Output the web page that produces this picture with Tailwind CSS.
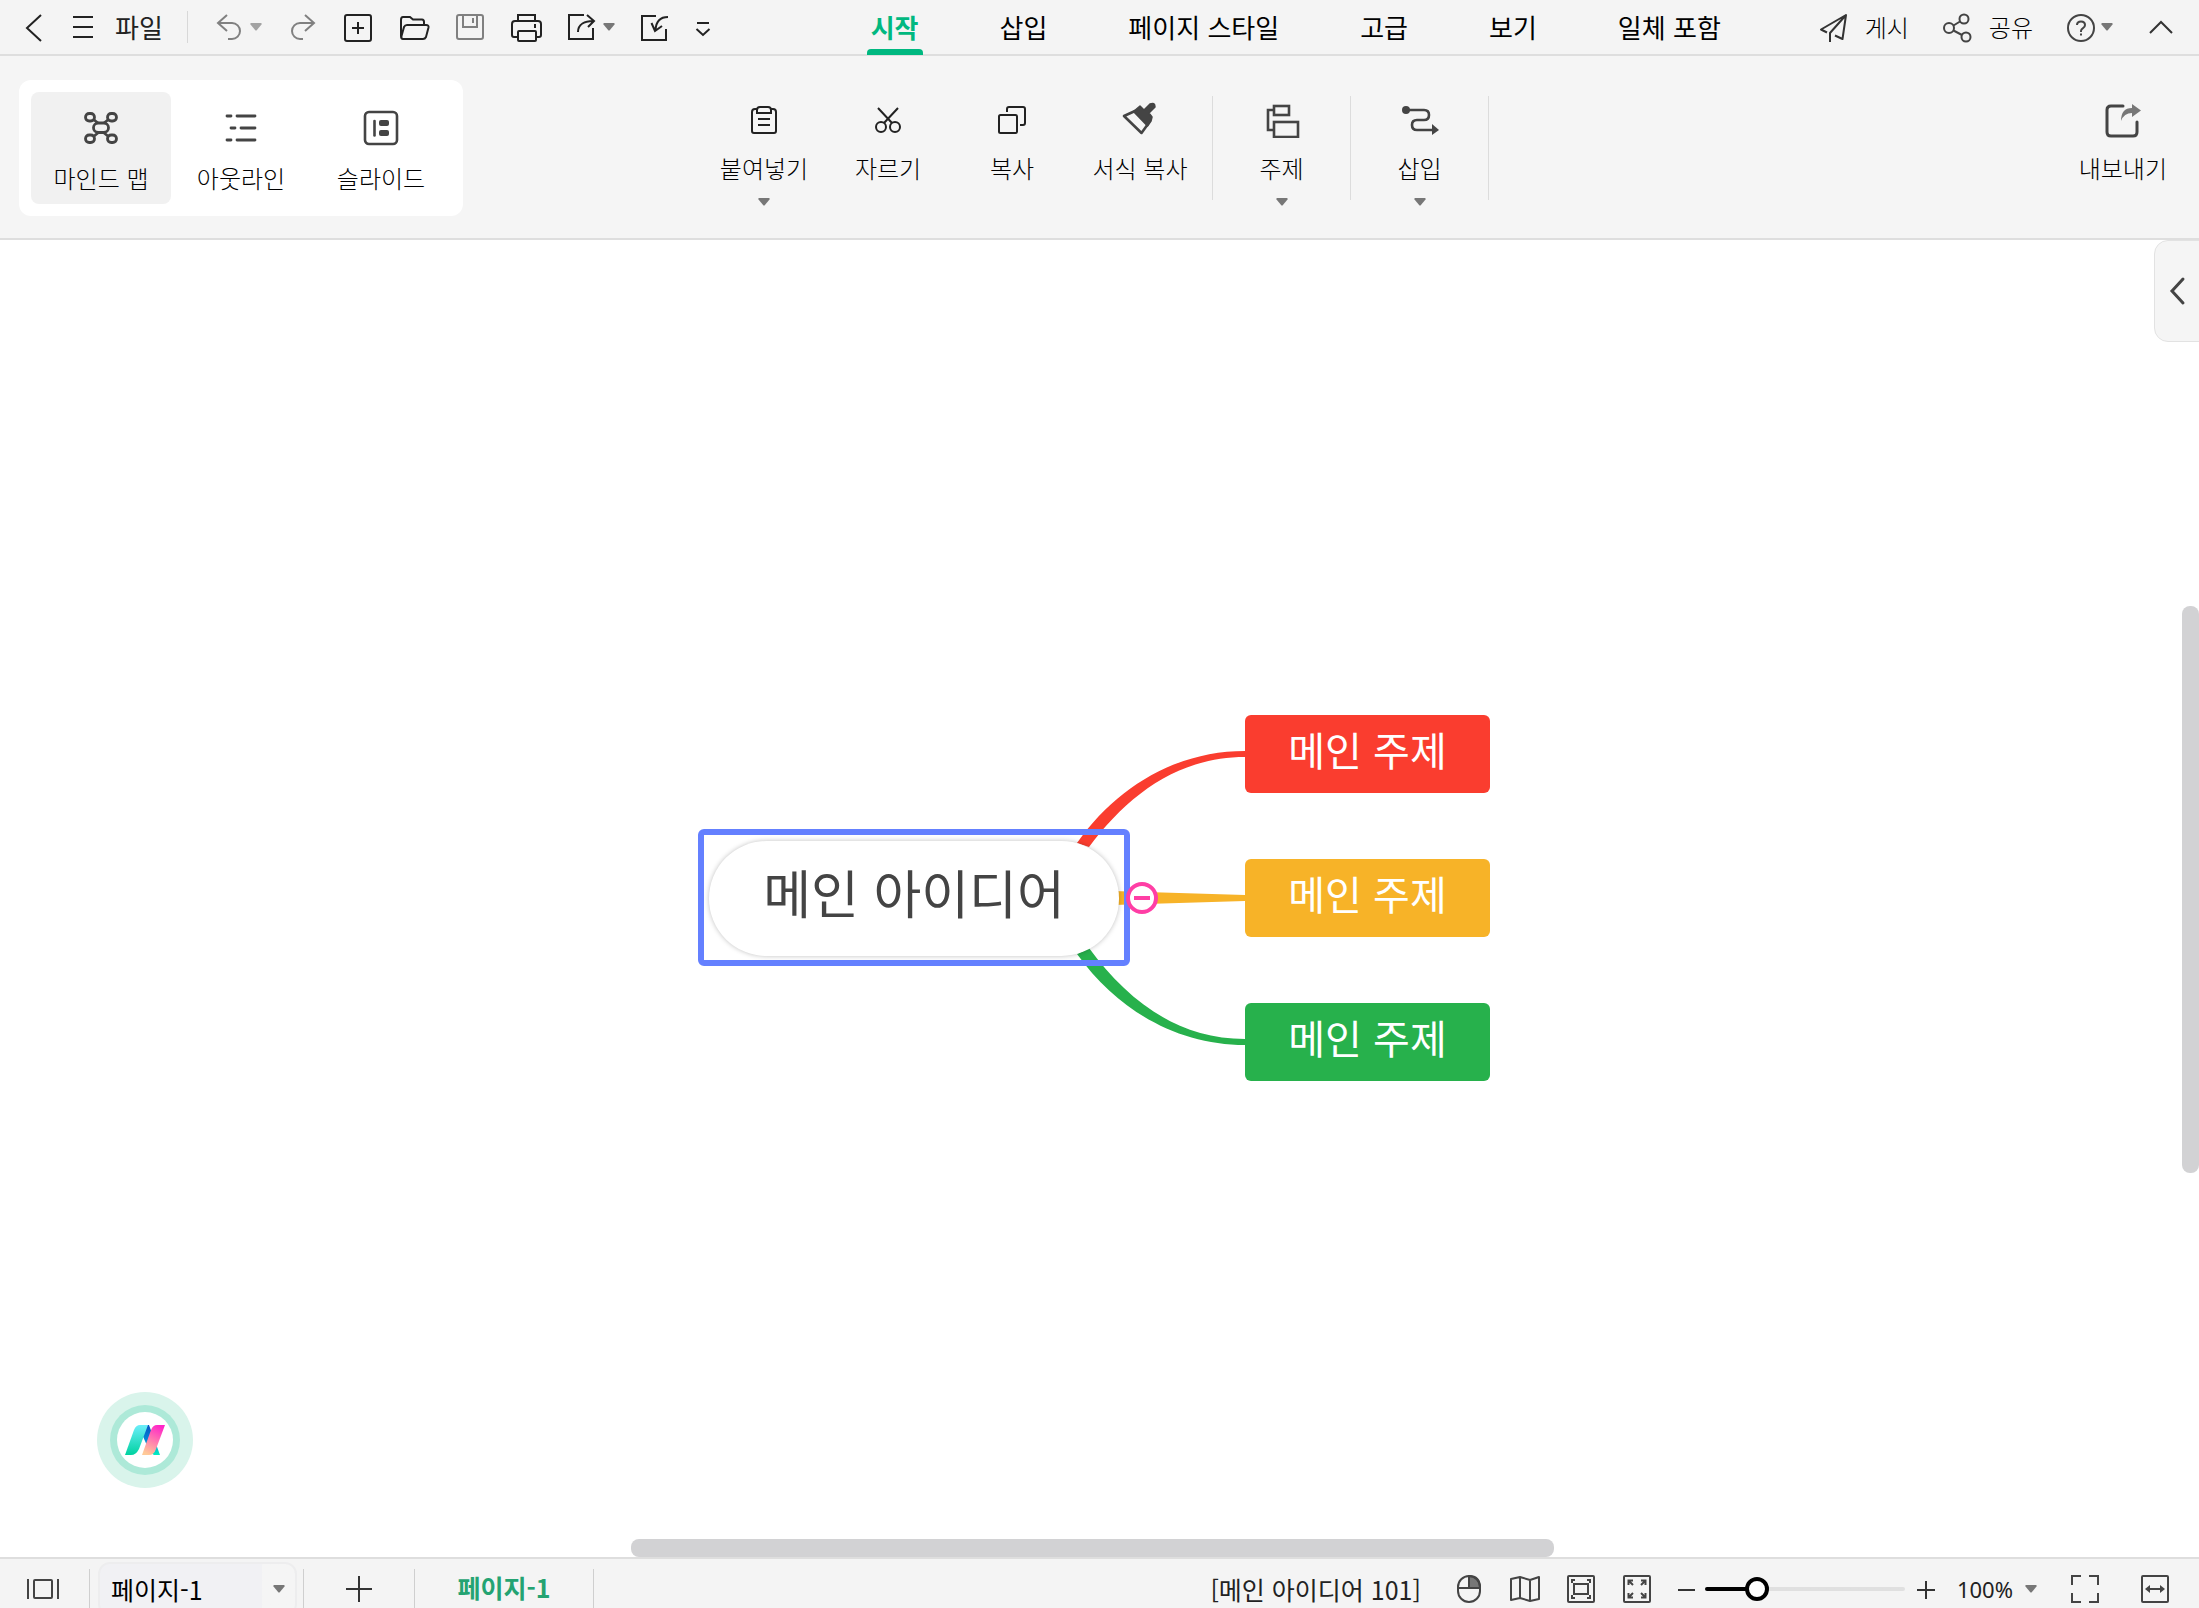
<!DOCTYPE html>
<html lang="ko">
<head>
<meta charset="utf-8">
<title>마인드 맵</title>
<script src="https://cdn.jsdelivr.net/npm/@tailwindcss/browser@4"></script>
</head>
<body class="flex h-screen flex-col overflow-hidden bg-white font-['Noto_Sans_CJK_KR',sans-serif] text-2xl text-[#222]">

<header class="flex h-14 shrink-0 items-center border-b-2 border-[#dedede] bg-[#f4f4f4]">
  <div class="flex items-center pl-[18px]">
    <button aria-label="뒤로"><svg class="size-8" viewBox="0 0 32 32" fill="none" stroke="#222" stroke-width="2"><path d="M23 4 9 17 23 30"/></svg></button>
    <button class="ml-[17px] flex items-center gap-4 text-[26px] leading-8"><svg class="size-8" viewBox="0 0 32 32" fill="none" stroke="#222" stroke-width="2"><path d="M6 6H26M6 16H26M6 26H26"/></svg>파일</button>
    <div class="ml-6 h-8 w-px bg-[#d8d8d8]"></div>
    <button class="ml-6 flex items-center gap-1.5" aria-label="실행 취소"><svg class="size-8" viewBox="0 0 32 32" fill="none" stroke="#808080" stroke-width="2"><path d="M15 4 6 12l9 8M6 12H20a8 8 0 0 1 0 16H16"/></svg><svg class="h-2 w-3" viewBox="0 0 12 8" fill="#a3a3a3"><path d="M1 0H11Q12 0 11.500 1.500L6.500 7.500H5.500L.5 1.500Q0 0 1 0Z"/></svg></button>
    <div class="ml-[25px] flex items-center gap-6">
      <button aria-label="다시 실행"><svg class="size-8" viewBox="0 0 32 32" fill="none" stroke="#808080" stroke-width="2"><path d="M18 4 27 12l-9 8M27 12H13a8 8 0 0 0 0 16h3"/></svg></button>
      <button aria-label="새로 만들기"><svg class="size-8" viewBox="0 0 32 32" fill="none" stroke="#222" stroke-width="2"><rect x="2" y="4" width="26" height="26" rx="2"/><path d="M9 17H21M15 11V23"/></svg></button>
      <button aria-label="열기"><svg class="size-8" viewBox="0 0 32 32" fill="none" stroke="#222" stroke-width="2"><path d="M4 28Q2 28 2 25V9Q2 6 4 6H11L14 8.500H23Q25 8.500 25 11V14M8 14H27Q30 14 29.500 16.500L27 26Q26 28 24 28H4Q2 28 2.500 25L5 16Q6 14 8 14Z"/></svg></button>
      <button aria-label="저장"><svg class="size-8" viewBox="0 0 32 32" fill="none" stroke="#808080" stroke-width="2"><rect x="2" y="4" width="26" height="24" rx="2"/><path d="M8 4V16H22V4M18 7V12"/></svg></button>
      <button aria-label="인쇄"><svg class="size-8" viewBox="0 0 32 32" fill="none" stroke="#222" stroke-width="2"><path d="M7 9V4H24V9M6 26H3Q1 26 1 24V13Q1 10 4 10H27Q30 10 30 13V24Q30 26 28 26H25M24 13V17"/><rect x="7" y="20" width="18" height="10" rx="1"/></svg></button>
      <button class="flex items-center gap-1" aria-label="내보내기"><svg class="size-8" viewBox="0 0 32 32" fill="none" stroke="#222" stroke-width="2"><path d="M17 4H2V28H26V17M11 21C11 13 18 10 26 10M20 4l7 6-6 6"/></svg><svg class="h-2 w-3" viewBox="0 0 12 8" fill="#777"><path d="M1 0H11Q12 0 11.500 1.500L6.500 7.500H5.500L.5 1.500Q0 0 1 0Z"/></svg></button>
      <button aria-label="가져오기"><svg class="size-8" viewBox="0 0 32 32" fill="none" stroke="#222" stroke-width="2"><path d="M17 5H3V29H27V18M29 6C21 6 17 11 16.500 19M12.500 12 16 20l7-5"/></svg></button>
      <button aria-label="더 보기"><svg class="h-8 w-4" viewBox="0 0 16 32" fill="none" stroke="#222" stroke-width="2"><path d="M2 12H14M1.500 18 8 24l6.500-6"/></svg></button>
    </div>
  </div>
  <nav class="flex flex-1 items-center justify-center gap-[81px] self-stretch pl-16 text-[26px] text-black">
    <a href="#" class="relative flex h-full items-center font-bold text-[#00b880]">시작<span class="absolute inset-x-0 -bottom-px -mx-1 h-1.5 rounded-t bg-[#00b880]"></span></a>
    <a href="#">삽입</a>
    <a href="#">페이지 스타일</a>
    <a href="#">고급</a>
    <a href="#">보기</a>
    <a href="#">일체 포함</a>
  </nav>
  <div class="flex items-center gap-8 pr-[22px] font-light text-black">
    <button class="flex items-center gap-4"><svg class="size-8" viewBox="0 0 32 32" fill="none" stroke="#333" stroke-width="2" stroke-linejoin="round"><path d="M10 21.500 4 18.500 29 4 25.500 28 18 24.500M29 4 13 22V31"/></svg>게시</button>
    <button class="flex items-center gap-4"><svg class="size-8" viewBox="0 0 32 32" fill="none" stroke="#444" stroke-width="2"><circle cx="8" cy="17" r="5"/><circle cx="23" cy="8" r="4.500"/><circle cx="25" cy="26" r="4.500"/><path d="M12.500 14.500 19 10.500M12.500 19.500 21 24"/></svg>공유</button>
    <button class="flex items-center gap-1" aria-label="도움말"><svg class="size-8" viewBox="0 0 32 32" fill="none" stroke="#444" stroke-width="2"><circle cx="16" cy="17" r="13"/><path d="M12 14Q12 10.500 16 10.500T20 14Q20 16 18 17.200T16 20V21M16 22.500V24.500"/></svg><svg class="h-2 w-3" viewBox="0 0 12 8" fill="#777"><path d="M1 0H11Q12 0 11.500 1.500L6.500 7.500H5.500L.5 1.500Q0 0 1 0Z"/></svg></button>
    <button aria-label="리본 접기"><svg class="size-8" viewBox="0 0 32 32" fill="none" stroke="#333" stroke-width="2"><path d="M5 22 16 11 27 22"/></svg></button>
  </div>
</header>

<section class="grid h-[184px] shrink-0 grid-cols-[1fr_auto_1fr] border-b-2 border-[#dedede] bg-[#f5f5f5] font-light text-black">
  <div class="flex items-start pt-6 pl-[19px]">
    <div class="flex rounded-xl bg-white p-3">
      <button class="flex h-28 w-[140px] flex-col items-center gap-3.5 rounded-lg bg-[#f1f1f1] pt-[18px] leading-9">
        <svg class="size-9" viewBox="0 0 36 36" fill="none" stroke="#444" stroke-width="2.800"><rect x="2.500" y="3.500" width="9" height="7.500" rx="3.700"/><rect x="24.500" y="3.500" width="9" height="7.500" rx="3.700"/><rect x="2.500" y="25" width="9" height="7.500" rx="3.700"/><rect x="24.500" y="25" width="9" height="7.500" rx="3.700"/><rect x="10.500" y="13" width="15" height="9.500" rx="4.700"/><path d="M10.500 9.500 15 13M25.500 9.500 21 13M10.500 26.500 15.500 22.500M25.500 26.500 20.500 22.500"/></svg>마인드 맵</button>
      <button class="flex h-28 w-[140px] flex-col items-center gap-3.5 rounded-lg pt-[18px] leading-9">
        <svg class="size-9" viewBox="0 0 36 36" fill="none" stroke="#444" stroke-width="2.800" stroke-linecap="round"><path d="M4 6H8M14 6H32M8 18H12M18 18H32M4 30H8M14 30H32"/></svg>아웃라인</button>
      <button class="flex h-28 w-[140px] flex-col items-center gap-3.5 rounded-lg pt-[18px] leading-9">
        <svg class="size-9" viewBox="0 0 36 36" fill="none" stroke="#444" stroke-width="2.600"><rect x="2" y="2" width="32" height="32" rx="4"/><path d="M11.500 11V25.500" stroke-linecap="round"/><rect x="16" y="10" width="10" height="6" rx="2" fill="#444" stroke="none"/><rect x="16" y="20" width="10" height="6" rx="2" fill="#444" stroke="none"/></svg>슬라이드</button>
    </div>
  </div>
  <div class="flex items-start pt-10 pr-2">
    <button class="flex w-[124px] flex-col items-center pt-1.5 leading-9"><svg class="mb-3 size-9" viewBox="0 0 36 36" fill="none" stroke="#222" stroke-width="2"><path d="M11 7H9Q6 7 6 10V29Q6 31 8 31H28Q30 31 30 29V10Q30 7 27 7H25M11 11V8Q11 5 14 5H22Q25 5 25 8V11ZM12 17H24M12 23H24"/></svg>붙여넣기<svg class="mt-3 h-2 w-3" viewBox="0 0 12 8" fill="#777"><path d="M1 0H11Q12 0 11.500 1.500L6.500 7.500H5.500L.5 1.500Q0 0 1 0Z"/></svg></button>
    <button class="flex w-[124px] flex-col items-center pt-1.5 leading-9"><svg class="mb-3 size-9" viewBox="0 0 36 36" fill="none" stroke="#222" stroke-width="2"><circle cx="11" cy="25" r="5"/><circle cx="25" cy="25" r="5"/><path d="M8 6 22 21M28 6 14 21"/></svg>자르기</button>
    <button class="flex w-[124px] flex-col items-center pt-1.5 leading-9"><svg class="mb-3 size-9" viewBox="0 0 36 36" fill="none" stroke="#222" stroke-width="2"><rect x="5" y="13" width="18" height="18" rx="1.500"/><path d="M13 10V7Q13 5 15 5H29Q31 5 31 7V21Q31 23 29 23H26"/></svg>복사</button>
    <button class="flex w-[132px] flex-col items-center pt-1.5 leading-9"><svg class="mb-3 size-9" viewBox="0 0 36 36" fill="none" stroke="#444" stroke-width="2.600" stroke-linejoin="round"><path d="M2 14 13 9 26 22 19.500 31Z"/><path d="M11.500 9.500 18 4 22 8 28 2Q33 0 33 5L27 11 30 15 29 19 25.500 24Z" fill="#444" stroke-width="1.500"/></svg>서식 복사</button>
    <div class="ml-1.5 flex h-[104px]">
      <button class="flex w-[138px] flex-col items-center border-l border-[#dcdcdc] pt-1.5 leading-9"><svg class="mb-3 size-9 shrink-0" viewBox="0 0 36 36" fill="none" stroke="#444" stroke-width="2.600"><rect x="10" y="4" width="15" height="9"/><rect x="10" y="20" width="24" height="15"/><path d="M10 8H4V28H10"/></svg>주제<svg class="mt-3 h-2 w-3 shrink-0" viewBox="0 0 12 8" fill="#777"><path d="M1 0H11Q12 0 11.500 1.500L6.500 7.500H5.500L.5 1.500Q0 0 1 0Z"/></svg></button>
      <button class="flex w-[139px] flex-col items-center border-x border-[#dcdcdc] pt-1.5 leading-9"><svg class="mb-3 size-9 shrink-0 overflow-visible" viewBox="0 0 36 36" fill="none" stroke="#444" stroke-width="2.600"><circle cx="4" cy="8" r="4" fill="#444" stroke="none"/><path d="M4 8H22Q27 8 27 13T22 18H15Q10 18 10 23T15 28H31"/><path d="M30 22 37 28 30 33Z" fill="#444" stroke="none"/></svg>삽입<svg class="mt-3 h-2 w-3 shrink-0" viewBox="0 0 12 8" fill="#777"><path d="M1 0H11Q12 0 11.500 1.500L6.500 7.500H5.500L.5 1.500Q0 0 1 0Z"/></svg></button>
    </div>
  </div>
  <div class="flex items-start justify-end pt-10 pr-8">
    <button class="flex flex-col items-center pt-1.5 leading-9"><svg class="mb-3 h-9 w-10" viewBox="0 0 40 36" fill="none" stroke="#444" stroke-width="3" stroke-linecap="round"><path d="M20 4H8Q4 4 4 8V30Q4 34 8 34H30Q34 34 34 30V20"/><path d="M18 19Q18 6 29 6V2L38 8.500 29 15V11Q21 11 18 19Z" fill="#777" stroke="none"/></svg>내보내기</button>
  </div>
</section>

<main class="relative flex min-h-0 flex-1 items-center justify-center overflow-hidden bg-white">
  <div class="relative h-[367px] w-[803px]">
    <svg class="absolute inset-0 size-full" viewBox="0 0 803 367">
      <path fill="#fa3d2f" d="M379 128C420 70 480 36 547 36V42C480 42 430 80 391 132Z"/>
      <path fill="#f7b328" d="M415 176 547 180V186L415 190Z"/>
      <path fill="#27b14c" d="M391 233C430 286 480 324 547 324V330C480 330 420 296 379 239Z"/>
    </svg>
    <div class="absolute top-[126px] left-[11px] flex h-[115px] w-[410px] items-center justify-center rounded-full bg-white pb-3.5 text-[52px] leading-none text-[#444] shadow-[0_0_5px_rgba(0,0,0,0.25)]">메인 아이디어</div>
    <div class="absolute top-[114px] left-0 h-[137px] w-[432px] rounded-md border-[6px] border-[#6480ff]"></div>
    <button class="absolute top-[167px] left-[428px] flex size-8 items-center justify-center rounded-full border-4 border-[#ff3ea5] bg-white" aria-label="접기"><span class="h-1 w-4 bg-[#ff3ea5]"></span></button>
    <div class="absolute top-0 left-[547px] flex h-[78px] w-[245px] items-center justify-center rounded-md bg-[#fa3d2f] pb-2.5 text-[40px] leading-none text-white">메인 주제</div>
    <div class="absolute top-[144px] left-[547px] flex h-[78px] w-[245px] items-center justify-center rounded-md bg-[#f7b328] pb-2.5 text-[40px] leading-none text-white">메인 주제</div>
    <div class="absolute top-[288px] left-[547px] flex h-[78px] w-[245px] items-center justify-center rounded-md bg-[#27b14c] pb-2.5 text-[40px] leading-none text-white">메인 주제</div>
  </div>

  <button class="absolute bottom-[69px] left-[97px] flex size-24 items-center justify-center rounded-full bg-[#d9f4eb]" aria-label="AI 도우미">
    <span class="flex size-[70px] items-center justify-center rounded-full bg-[#ade9d8]"><span class="flex size-14 items-center justify-center rounded-full bg-white">
      <svg class="h-8 w-10" viewBox="0 0 40 32">
        <defs>
          <linearGradient id="teal" x1="0" y1="0" x2="0" y2="1"><stop offset="0" stop-color="#6ceefa"/><stop offset="1" stop-color="#00d2a0"/></linearGradient>
          <linearGradient id="blue" x1="0" y1="0" x2="0" y2="1"><stop offset="0" stop-color="#0a50c0"/><stop offset=".5" stop-color="#0088d8"/><stop offset="1" stop-color="#00f0c0"/></linearGradient>
          <linearGradient id="pink" x1=".7" y1="0" x2=".3" y2="1"><stop offset="0" stop-color="#ff25c8"/><stop offset="1" stop-color="#ffca98"/></linearGradient>
        </defs>
        <path fill="url(#blue)" d="M22 1H24L35 31H29Q25 29 24 26L16 8Z"/>
        <path fill="url(#teal)" d="M15 1H23L14 25Q11 31 6 31H0L9 6Q11 1 15 1Z"/>
        <path fill="url(#pink)" d="M32 1H40L31 25Q29 31 24 31H17L26 6Q28 1 32 1Z"/>
      </svg></span></span>
  </button>

  <button class="absolute top-0 -right-px flex h-[102px] w-[46px] items-center rounded-l-[14px] border border-[#e2e2e2] bg-[#f5f5f5] pl-3.5" aria-label="패널 열기"><svg class="h-8 w-5" viewBox="0 0 20 32" fill="none" stroke="#444" stroke-width="3" stroke-linecap="round"><path d="M14 4 3 16 14 28"/></svg></button>
  <div class="absolute top-[366px] right-0 h-[567px] w-[17px] rounded-lg bg-[#d2d2d4]"></div>
  <div class="absolute bottom-0 left-[631px] h-[18px] w-[923px] rounded-lg bg-[#d2d2d4]"></div>
</main>

<footer class="h-[51px] shrink-0 overflow-hidden border-t-2 border-[#dedede] bg-[#f4f4f4]">
  <div class="flex h-[60px] items-center">
    <button class="ml-[25px]" aria-label="페이지 패널"><svg class="h-8 w-9" viewBox="0 0 36 32" fill="none" stroke="#444" stroke-width="2"><path d="M3 6V26M33 6V26"/><rect x="9" y="7" width="18" height="18" rx="1"/></svg></button>
    <div class="ml-7 h-[50px] w-px self-end bg-[#cfcfcf]"></div>
    <label class="relative ml-2 flex h-[54px] w-[199px] items-center rounded-xl border-2 border-[#ededee] bg-linear-to-r from-[#f1f1f4] from-83% to-[#f5f5f5] to-83%">
      <select class="w-full appearance-none bg-transparent pl-[11px] text-[25px] leading-8 text-black" aria-label="페이지 선택"><option>페이지-1</option></select>
      <svg class="pointer-events-none absolute right-2.5 h-2 w-3" viewBox="0 0 12 8" fill="#777"><path d="M1 0H11Q12 0 11.500 1.500L6.500 7.500H5.500L.5 1.500Q0 0 1 0Z"/></svg>
    </label>
    <div class="ml-1.5 h-[50px] w-px self-end bg-[#cfcfcf]"></div>
    <button class="ml-[39px]" aria-label="페이지 추가"><svg class="size-8" viewBox="0 0 32 32" fill="none" stroke="#333" stroke-width="2"><path d="M3 16H29M16 3V29"/></svg></button>
    <a href="#" class="ml-[39px] flex h-[50px] w-[180px] items-center justify-center self-end border-x border-[#cfcfcf] pb-3 text-[25px] font-bold text-[#24a372]">페이지-1</a>

    <div class="ml-auto flex items-center pr-7">
      <span class="text-[25px] leading-8">[메인 아이디어 101]</span>
      <div class="ml-8 flex items-center gap-6">
        <button aria-label="마우스"><svg class="size-8" viewBox="0 0 32 32" fill="none" stroke="#444" stroke-width="2"><path d="M16 15V3Q27 3 27 15Z" fill="#777"/><rect x="5" y="3" width="22" height="26" rx="11"/><path d="M5 15H27"/></svg></button>
        <button aria-label="개요 지도"><svg class="size-8" viewBox="0 0 32 32" fill="none" stroke="#444" stroke-width="2" stroke-linejoin="round"><path d="M2 6 11 4 21 7 30 4V26L21 28 11 25 2 27ZM11 4V25M21 7V28"/></svg></button>
        <button aria-label="화면 맞춤"><svg class="size-8" viewBox="0 0 32 32" fill="none" stroke="#444" stroke-width="2"><rect x="3" y="3" width="26" height="26" rx="1"/><rect x="9" y="11" width="14" height="10"/><path d="M7 10V7H10M22 7H25V10M7 22V25H10M22 25H25V22"/></svg></button>
        <button aria-label="선택 영역 맞춤"><svg class="size-8" viewBox="0 0 32 32" fill="none" stroke="#444" stroke-width="2"><rect x="3" y="3" width="26" height="26" rx="1"/><path d="M7.500 12V7.500H12M7.500 7.500 12 12M20 7.500H24.500V12M24.500 7.500 20 12M7.500 20V24.500H12M7.500 24.500 12 20M20 24.500H24.500V20M24.500 24.500 20 20"/></svg></button>
      </div>
      <button class="ml-6" aria-label="축소"><svg class="size-5" viewBox="0 0 20 20" stroke="#333" stroke-width="2"><path d="M1 11H18"/></svg></button>
      <input type="range" min="0" max="100" value="23" aria-label="확대/축소" class="ml-2 h-1 w-[200px] appearance-none rounded-full bg-linear-to-r from-black from-25% to-[#e0e0e0] to-25% [&::-webkit-slider-thumb]:size-6 [&::-webkit-slider-thumb]:appearance-none [&::-webkit-slider-thumb]:rounded-full [&::-webkit-slider-thumb]:border-4 [&::-webkit-slider-thumb]:border-black [&::-webkit-slider-thumb]:bg-white">
      <button class="ml-3" aria-label="확대"><svg class="size-5" viewBox="0 0 20 20" stroke="#333" stroke-width="2"><path d="M0 11H18M9 2V20"/></svg></button>
      <button class="ml-5 flex items-center gap-3 font-['Noto_Sans',sans-serif] text-[22px] leading-8">100%<svg class="h-2 w-3" viewBox="0 0 12 8" fill="#777"><path d="M1 0H11Q12 0 11.500 1.500L6.500 7.500H5.500L.5 1.500Q0 0 1 0Z"/></svg></button>
      <button class="ml-8" aria-label="전체 화면"><svg class="size-8" viewBox="0 0 32 32" fill="none" stroke="#444" stroke-width="2"><path d="M3 12V3H12M20 3H29V12M3 20V29H12M20 29H29V20"/></svg></button>
      <button class="ml-[38px]" aria-label="너비 맞춤"><svg class="size-8" viewBox="0 0 32 32" fill="none" stroke="#444" stroke-width="2"><rect x="3" y="3" width="26" height="26" rx="1"/><path d="M8 16H24"/><path d="M6 16 11 12V20ZM26 16 21 12V20Z" fill="#444" stroke="none"/></svg></button>
    </div>
  </div>
</footer>
</body>
</html>
